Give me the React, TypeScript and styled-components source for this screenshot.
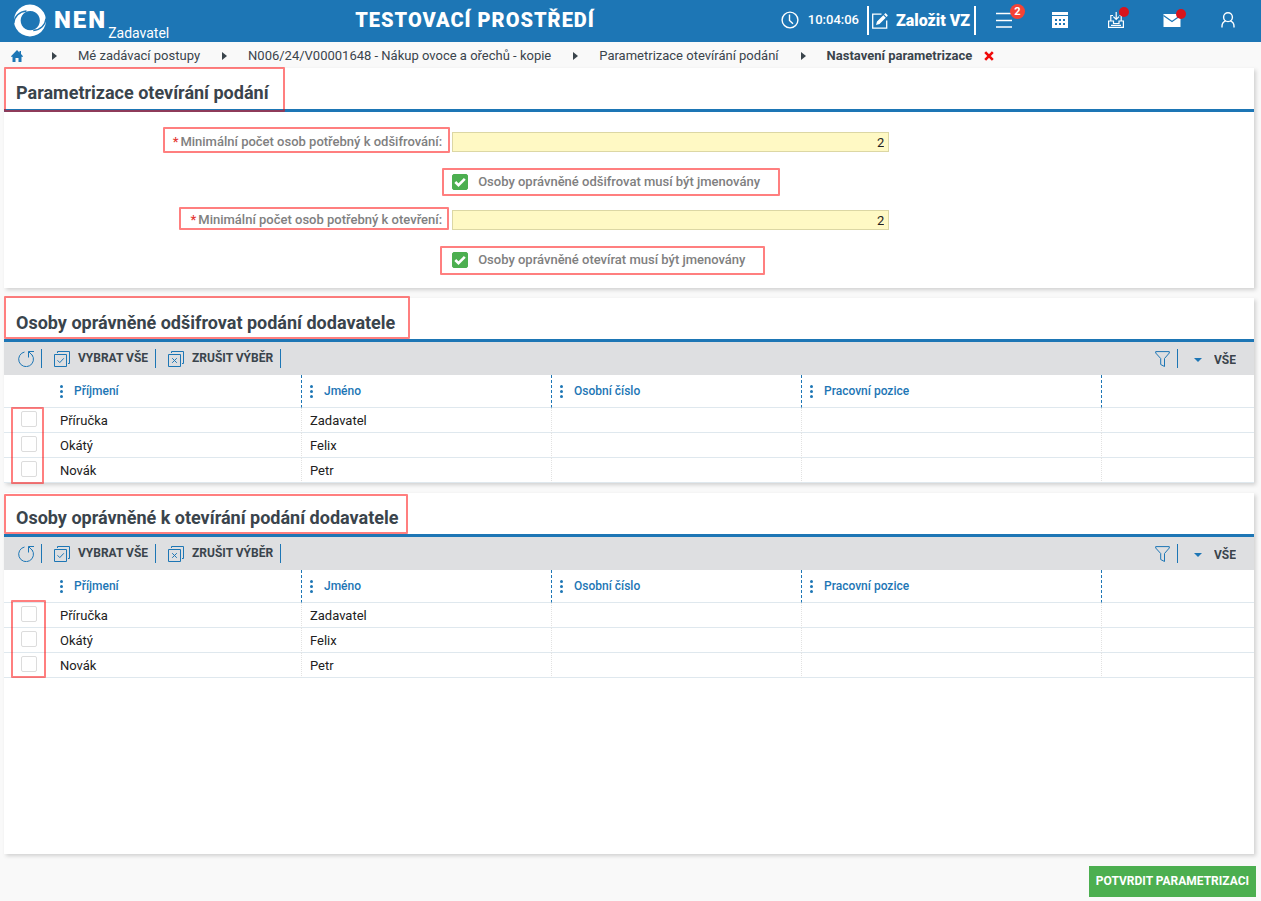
import React, { useState } from "react";
import styled, { createGlobalStyle, css } from "styled-components";

const blue = "#1d76b5";
const ink = "#3a444c";

const GlobalStyle = createGlobalStyle`
  *, *::before, *::after { box-sizing: border-box; }
  body {
    margin: 0;
    background: #f9f9f9;
    color: #212121;
    font-family: Roboto, "Liberation Sans", sans-serif;
    font-size: 13px;
    line-height: 20px;
  }
  button, input, select { font: inherit; color: inherit; }
  button { padding: 0; border: 0; background: none; cursor: pointer; }
  svg { display: block; flex: none; }
`;

const Page = styled.div`
  display: flex;
  flex-direction: column;
  min-height: 100vh;
`;

/* ---------- top bar ---------- */

const TopBar = styled.header`
  display: flex;
  align-items: center;
  height: 42px;
  padding: 0 5px 2px 13px;
  background: ${blue};
  color: #fff;
`;

const Brand = styled.a`
  display: flex;
  align-items: center;
  height: 40px;
  color: inherit;
  text-decoration: none;
`;

const BrandName = styled.span`
  margin-left: 8px;
  font-size: 24px;
  font-weight: 900;
  letter-spacing: 2px;
`;

const BrandRole = styled.span`
  align-self: flex-end;
  margin-left: 1px;
  font-size: 14px;
  line-height: 14px;
`;

const Environment = styled.div`
  flex: 1;
  text-align: center;
  font-size: 20px;
  font-weight: 900;
  letter-spacing: 1px;
`;

const Clock = styled.div`
  display: flex;
  align-items: center;
  gap: 9px;
  padding-right: 8px;
  font-weight: 500;
`;

const CreateButton = styled.button`
  display: flex;
  align-items: center;
  gap: 8px;
  height: 29px;
  padding: 1px 4px 0 3px;
  border: solid #fff;
  border-width: 0 2px;
  font-size: 16px;
  font-weight: 900;
  white-space: nowrap;
`;

const NavIcon = styled.button`
  display: flex;
  align-items: center;
  justify-content: center;
  width: 56px;
  height: 40px;
`;

const IconHolder = styled.span`
  position: relative;
  display: block;
`;

const Badge = styled.span`
  position: absolute;
  top: -8px;
  right: -13px;
  width: 15px;
  height: 15px;
  border-radius: 50%;
  background: #f44336;
  font-size: 11px;
  line-height: 15px;
  font-weight: 700;
  text-align: center;
`;

const Dot = styled.span`
  position: absolute;
  top: -5px;
  right: -5px;
  width: 10px;
  height: 10px;
  border-radius: 50%;
  background: #d8141c;
`;

/* ---------- breadcrumbs ---------- */

const Breadcrumbs = styled.nav`
  display: flex;
  align-items: center;
  gap: 22px;
  height: 26px;
  padding: 1px 11px 0;
  color: ${ink};
  white-space: nowrap;
`;

const HomeLink = styled.a`
  width: 19px;
`;

const Crumb = styled.a<{ $current?: boolean }>`
  color: inherit;
  text-decoration: none;
  font-weight: ${(p) => (p.$current ? 700 : 400)};
`;

const CurrentCrumb = styled.span`
  display: flex;
  align-items: center;
  gap: 12px;
`;

/* ---------- panels ---------- */

const Content = styled.main`
  display: flex;
  flex: 1;
  flex-direction: column;
  gap: 10px;
  padding: 0 7px 12px 4px;
`;

const Panel = styled.section<{ $grow?: boolean }>`
  flex: ${(p) => (p.$grow ? "1 0 auto" : "none")};
  background: #fff;
  box-shadow: 2px 2px 4px rgba(0, 0, 0, 0.16);
`;

const PanelHead = styled.div`
  position: relative;
  height: 44px;
  padding: 8px 12px 0;
  border-bottom: 3px solid ${blue};
`;

const PanelTitle = styled.h2`
  margin: 0;
  color: ${ink};
  font-size: 18px;
  line-height: 33px;
  font-weight: 700;
`;

/* Red marker frame laid over the part that it draws attention to. */
const Marker = styled.span<{ $inset: string; $width?: number; $height?: number }>`
  position: absolute;
  z-index: 1;
  inset: ${(p) => p.$inset};
  ${(p) => p.$width && css`width: ${p.$width}px;`}
  ${(p) => p.$height && css`height: ${p.$height}px;`}
  border: 2px solid rgba(255, 0, 0, 0.5);
  border-radius: 1px;
  pointer-events: none;
`;

/* ---------- form ---------- */

const Form = styled.div`
  display: flex;
  flex-direction: column;
  gap: 20px;
  padding: 20px 0 20px 1px;
  color: #808080;
  font-weight: 500;
`;

const FieldGroup = styled.div`
  display: grid;
  grid-template-columns: 35% 35%;
  gap: 22px 10px;
`;

const FieldLabel = styled.label`
  position: relative;
  justify-self: end;
  white-space: nowrap;
`;

const Required = styled.span`
  margin-right: 2px;
  color: #e53935;
`;

const NumberInput = styled.input`
  width: 100%;
  height: 20px;
  padding: 1px 4px 0;
  border: 1px solid #dcd7a4;
  border-radius: 0;
  background: #fff9c4;
  color: #212121;
  text-align: right;
  font-weight: 400;
`;

const CheckLabel = styled.label`
  position: relative;
  grid-column: 2;
  justify-self: start;
  display: flex;
  align-items: center;
  gap: 10px;
  height: 16px;
  white-space: nowrap;
`;

const TickHolder = styled.span`
  position: relative;
  display: block;
  width: 16px;
  height: 16px;

  svg {
    position: absolute;
    inset: 0;
    visibility: hidden;
    pointer-events: none;
  }
  input:checked + svg { visibility: visible; }
`;

const TickInput = styled.input`
  display: block;
  appearance: none;
  width: 16px;
  height: 16px;
  margin: 0;
  border: 1px solid #dcdcdc;
  border-radius: 2px;
  background: #fff;

  &:checked {
    border-color: #4caf50;
    background: #4caf50;
  }
`;

/* ---------- tables ---------- */

const Toolbar = styled.div`
  display: flex;
  align-items: center;
  height: 33px;
  padding: 0 18px 0 2px;
  background: #dedfe1;
  color: ${ink};
  font-size: 12px;
  font-weight: 700;
`;

const ToolButton = styled.button`
  display: flex;
  align-items: center;
  gap: 8px;
  height: 19px;
  padding: 0 7px 0 12px;
  border-right: 1px solid ${blue};
  line-height: 18px;
`;

const ToolText = styled.span`
  align-self: flex-start;
`;

const Spacer = styled.div`
  flex: 1;
`;

const ScopePicker = styled.label`
  display: flex;
  align-items: center;
  gap: 12px;
  padding: 2px 0 0 16px;
`;

const ScopeSelect = styled.select`
  appearance: none;
  padding: 0;
  border: 0;
  background: none;
`;

const TableArea = styled.div`
  position: relative;
`;

const Table = styled.table`
  width: 100%;
  table-layout: fixed;
  border-collapse: separate;
  border-spacing: 0;
`;

const Col = styled.col<{ $width?: number }>`
  ${(p) => p.$width && css`width: ${p.$width}px;`}
`;

const HeadCell = styled.th<{ $divided?: boolean }>`
  height: 33px;
  padding: 0 8px;
  border-bottom: 1px solid #dfe8ee;
  ${(p) => p.$divided && css`border-right: 1px dashed ${blue};`}
  color: ${blue};
  font-size: 12px;
  font-weight: 500;
  text-align: left;
`;

const HeadLabel = styled.span`
  display: flex;
  align-items: center;
  gap: 11px;
`;

const Cell = styled.td<{ $divided?: boolean }>`
  height: 25px;
  padding: 2px 8px 0;
  border-bottom: 1px solid #dfe8ee;
  ${(p) => p.$divided && css`border-right: 1px dotted #e2e2e2;`}
`;

const SelectCell = styled(Cell)`
  padding: 3px 0 0 17px;
  vertical-align: top;
`;

/* ---------- footer ---------- */

const Footer = styled.footer`
  display: flex;
  justify-content: flex-end;
  padding: 0 5px 4px;
`;

const ConfirmButton = styled.button`
  height: 31px;
  padding: 0 7px 2px;
  background: #4caf50;
  color: #fff;
  font-size: 12px;
  font-weight: 700;
`;

/* ---------- icons ---------- */

const LogoIcon = () => (
  <svg width="33" height="33" viewBox="0 0 33 33" aria-hidden="true">
    <path fill="#fff" fillRule="evenodd" d="M17 .500a16 16 0 1 1-.1 0ZM17.200 7a9.600 9.600 0 1 0 .1 0Z" />
    <path d="M.8 19C1.500 12.500 6.200 7.600 13.500 7" fill="none" stroke={blue} strokeWidth="1.400" />
    <path d="M33 14.500c-.7 6.500-5.400 11.400-12.700 12" fill="none" stroke={blue} strokeWidth="1.400" />
  </svg>
);

const ClockIcon = () => (
  <svg width="18" height="18" viewBox="0 0 18 18" fill="none" stroke="#fff" strokeWidth="1.400" aria-hidden="true">
    <circle cx="9" cy="9" r="7.900" />
    <path d="M8.500 3.500V9.500l3.500 3.300" />
  </svg>
);

const EditIcon = () => (
  <svg width="16" height="16" viewBox="0 0 16 16" aria-hidden="true">
    <path d="M9.500 1.200H.7v14h14V7.500" fill="none" stroke="#fff" strokeWidth="1.300" />
    <path d="M4 12l1-3.600L11.300 2.200l2.500 2.500L7.500 11ZM12.100 1.400l.9-.9c.3-.3.700-.3 1 0l1.500 1.500c.3.300.3.700 0 1l-.9.900Z" fill="#fff" />
  </svg>
);

const MenuIcon = () => (
  <svg width="16" height="16" viewBox="0 0 16 16" stroke="#fff" strokeWidth="1.600" aria-hidden="true">
    <path d="M0 1.500h16M0 8.500h16M0 15h16" />
  </svg>
);

const CalendarIcon = () => (
  <svg width="16" height="16" viewBox="0 0 16 16" aria-hidden="true">
    <path fill="#fff" fillRule="evenodd" d="M0 0h16v3H0ZM0 4h16V16H0ZM3 7v2h2V7Zm4 0v2h2V7ZM11 7v2h2V7ZM3 11v2h2v-2Zm4 0v2h2v-2ZM11 11v2h2v-2Z" />
  </svg>
);

const InboxIcon = () => (
  <svg width="16" height="16" viewBox="0 0 16 16" fill="none" stroke="#fff" strokeWidth="1.200" aria-hidden="true">
    <path d="M5 3.500H2.800V9M11.500 3.500h1.700V9M.6 9v6.300h14.800V9H11v2.500H5.500V9ZM3 13.300h10M8.200 0v7.200M5.400 4.600l2.800 2.800L11 4.600" />
  </svg>
);

const MailIcon = () => (
  <svg width="18" height="13" viewBox="0 0 18 13" aria-hidden="true">
    <path fill="#fff" d="M.5 0h17v13H.5Z" />
    <path d="M.5 1.500l8.500 6 8.500-6" fill="none" stroke={blue} strokeWidth="1.200" />
  </svg>
);

const UserIcon = () => (
  <svg width="14" height="16" viewBox="0 0 14 16" fill="none" stroke="#fff" strokeWidth="1.400" aria-hidden="true">
    <circle cx="7" cy="5.200" r="4.400" />
    <path d="M1 15.500v-1.300c0-2.600 1.400-4.400 3.700-5.300M13 15.500v-1.300c0-2.600-1.400-4.400-3.700-5.300" />
  </svg>
);

const HomeIcon = () => (
  <svg width="12" height="12" viewBox="0 0 12 12" fill={blue} aria-hidden="true">
    <path d="M6 0l2.500 2.500V1H10v3l2 2.200v.6H10.500V12h-3V8h-3v4h-3V6.800H0v-.6Z" />
  </svg>
);

const ArrowIcon = () => (
  <svg width="4" height="8" viewBox="0 0 4 8" fill={ink} overflow="visible" aria-hidden="true">
    <path d="M0 0l5 4-5 4Z" />
  </svg>
);

const CloseIcon = () => (
  <svg width="10" height="10" viewBox="0 0 10 10" stroke="#f00a0a" strokeWidth="2.600" aria-hidden="true">
    <path d="M1.200 1.200l7.600 7.600M8.800 1.200L1.200 8.800" />
  </svg>
);

const TickIcon = () => (
  <svg width="16" height="16" viewBox="0 0 16 16" fill="none" stroke="#fff" strokeWidth="2.600" aria-hidden="true">
    <path d="M3.300 8l3.200 3.200L12.800 4.800" />
  </svg>
);

const RefreshIcon = () => (
  <svg width="16" height="16" viewBox="0 0 16 16" fill="none" stroke={blue} aria-hidden="true">
    <path d="M6.500 1A7.400 7.400 0 1 0 14 3.800M16 .5H10.500V6.500M10.700.700l4 4" />
  </svg>
);

const SelectAllIcon = () => (
  <svg width="16" height="16" viewBox="0 0 16 16" fill="none" stroke={blue} aria-hidden="true">
    <path d="M.5 3.500h12v12H.5ZM3.500 2V.5h12v12H14M3.500 9.300l2.300 2.300 4-4.300" />
  </svg>
);

const ClearIcon = () => (
  <svg width="16" height="16" viewBox="0 0 16 16" fill="none" stroke={blue} aria-hidden="true">
    <path d="M.5 3.500h12v12H.5ZM3.500 2V.5h12v12H14M4.200 7.200l4.600 4.600M8.800 7.200l-4.600 4.600" />
  </svg>
);

const FilterIcon = () => (
  <svg width="15" height="16" viewBox="0 0 15 16" fill="none" stroke={blue} aria-hidden="true">
    <path d="M.7.600h13.600v1.400L9.500 7.500v8L5.700 13.500v-6L.7 2Z" />
  </svg>
);

const CaretIcon = () => (
  <svg width="8" height="4" viewBox="0 0 8 4" fill={blue} aria-hidden="true">
    <path d="M0 0h8L4 4Z" />
  </svg>
);

const DotsIcon = () => (
  <svg width="3" height="13" viewBox="0 0 3 13" fill={blue} aria-hidden="true">
    <circle cx="1.500" cy="1.500" r="1.500" />
    <circle cx="1.500" cy="6.500" r="1.500" />
    <circle cx="1.500" cy="11.500" r="1.500" />
  </svg>
);

/* ---------- composed parts ---------- */

type TickProps = { id?: string; label?: string; initial?: boolean };

const Tick = ({ id, label, initial = false }: TickProps) => {
  const [on, setOn] = useState(initial);
  return (
    <TickHolder>
      <TickInput type="checkbox" id={id} aria-label={label} checked={on} onChange={() => setOn(!on)} />
      <TickIcon />
    </TickHolder>
  );
};

type FieldsProps = {
  name: string;
  label: string;
  check: string;
  labelInset: string;
  checkInset: string;
};

const Fields = ({ name, label, check, labelInset, checkInset }: FieldsProps) => (
  <FieldGroup>
    <FieldLabel htmlFor={name}>
      <Required>*</Required>
      {label}
      <Marker $inset={labelInset} />
    </FieldLabel>
    <NumberInput id={name} type="text" inputMode="numeric" defaultValue="2" />
    <CheckLabel htmlFor={`${name}-named`}>
      <Tick id={`${name}-named`} initial />
      {check}
      <Marker $inset={checkInset} />
    </CheckLabel>
  </FieldGroup>
);

const columns = ["Příjmení", "Jméno", "Osobní číslo", "Pracovní pozice"];
const people = [
  ["Příručka", "Zadavatel"],
  ["Okátý", "Felix"],
  ["Novák", "Petr"],
];

type Frame = { inset: string; width: number; height: number };
type PeoplePanelProps = { title: string; grow?: boolean; titleFrame: Frame; tickFrame: Frame };

const PeoplePanel = ({ title, grow, titleFrame, tickFrame }: PeoplePanelProps) => (
  <Panel $grow={grow}>
    <PanelHead>
      <PanelTitle>{title}</PanelTitle>
      <Marker $inset={titleFrame.inset} $width={titleFrame.width} $height={titleFrame.height} />
    </PanelHead>
    <Toolbar>
      <ToolButton aria-label="Obnovit"><RefreshIcon /></ToolButton>
      <ToolButton><SelectAllIcon /><ToolText>VYBRAT VŠE</ToolText></ToolButton>
      <ToolButton><ClearIcon /><ToolText>ZRUŠIT VÝBĚR</ToolText></ToolButton>
      <Spacer />
      <ToolButton aria-label="Filtr"><FilterIcon /></ToolButton>
      <ScopePicker>
        <CaretIcon />
        <ScopeSelect aria-label="Zobrazení">
          <option>VŠE</option>
        </ScopeSelect>
      </ScopePicker>
    </Toolbar>
    <TableArea>
      <Table>
        <colgroup>
          <Col $width={48} />
          <Col $width={250} />
          <Col $width={250} />
          <Col $width={250} />
          <Col $width={300} />
          <Col />
        </colgroup>
        <thead>
          <tr>
            <HeadCell />
            {columns.map((name) => (
              <HeadCell key={name} $divided>
                <HeadLabel><DotsIcon />{name}</HeadLabel>
              </HeadCell>
            ))}
            <HeadCell />
          </tr>
        </thead>
        <tbody>
          {people.map(([surname, first]) => (
            <tr key={surname}>
              <SelectCell><Tick label={`${surname} ${first}`} /></SelectCell>
              <Cell $divided>{surname}</Cell>
              <Cell $divided>{first}</Cell>
              <Cell $divided />
              <Cell $divided />
              <Cell />
            </tr>
          ))}
        </tbody>
      </Table>
      <Marker $inset={tickFrame.inset} $width={tickFrame.width} $height={tickFrame.height} />
    </TableArea>
  </Panel>
);

export default function App() {
  return (
    <Page>
      <GlobalStyle />
      <TopBar>
        <Brand href="#">
          <LogoIcon />
          <BrandName>NEN</BrandName>
          <BrandRole>Zadavatel</BrandRole>
        </Brand>
        <Environment>TESTOVACÍ PROSTŘEDÍ</Environment>
        <Clock><ClockIcon />10:04:06</Clock>
        <CreateButton><EditIcon />Založit VZ</CreateButton>
        <NavIcon aria-label="Menu"><IconHolder><MenuIcon /><Badge>2</Badge></IconHolder></NavIcon>
        <NavIcon aria-label="Kalendář"><IconHolder><CalendarIcon /></IconHolder></NavIcon>
        <NavIcon aria-label="Doručené"><IconHolder><InboxIcon /><Dot /></IconHolder></NavIcon>
        <NavIcon aria-label="Zprávy"><IconHolder><MailIcon /><Dot /></IconHolder></NavIcon>
        <NavIcon aria-label="Uživatel"><IconHolder><UserIcon /></IconHolder></NavIcon>
      </TopBar>

      <Breadcrumbs>
        <HomeLink href="#" aria-label="Domů"><HomeIcon /></HomeLink>
        <ArrowIcon />
        <Crumb href="#">Mé zadávací postupy</Crumb>
        <ArrowIcon />
        <Crumb href="#">N006/24/V00001648 - Nákup ovoce a ořechů - kopie</Crumb>
        <ArrowIcon />
        <Crumb href="#">Parametrizace otevírání podání</Crumb>
        <ArrowIcon />
        <CurrentCrumb>
          <Crumb href="#" $current>Nastavení parametrizace</Crumb>
          <button aria-label="Zavřít"><CloseIcon /></button>
        </CurrentCrumb>
      </Breadcrumbs>

      <Content>
        <Panel>
          <PanelHead>
            <PanelTitle>Parametrizace otevírání podání</PanelTitle>
            <Marker $inset="-1px auto auto 0" $width={281} $height={45} />
          </PanelHead>
          <Form>
            <Fields
              name="decrypt"
              label="Minimální počet osob potřebný k odšifrování:"
              check="Osoby oprávněné odšifrovat musí být jmenovány"
              labelInset="-5px -8px -1px -10px"
              checkInset="-6px -20px -6px -10px"
            />
            <Fields
              name="open"
              label="Minimální počet osob potřebný k otevření:"
              check="Osoby oprávněné otevírat musí být jmenovány"
              labelInset="-3px -7px 0 -12px"
              checkInset="-6px -20px -7px -12px"
            />
          </Form>
        </Panel>
        <PeoplePanel
          title="Osoby oprávněné odšifrovat podání dodavatele"
          titleFrame={{ inset: "-2px auto auto 0", width: 406, height: 43 }}
          tickFrame={{ inset: "32px auto auto 7px", width: 33, height: 77 }}
        />
        <PeoplePanel
          grow
          title="Osoby oprávněné k otevírání podání dodavatele"
          titleFrame={{ inset: "1px auto auto 0", width: 404, height: 40 }}
          tickFrame={{ inset: "30px auto auto 7px", width: 35, height: 78 }}
        />
      </Content>

      <Footer>
        <ConfirmButton>POTVRDIT PARAMETRIZACI</ConfirmButton>
      </Footer>
    </Page>
  );
}
